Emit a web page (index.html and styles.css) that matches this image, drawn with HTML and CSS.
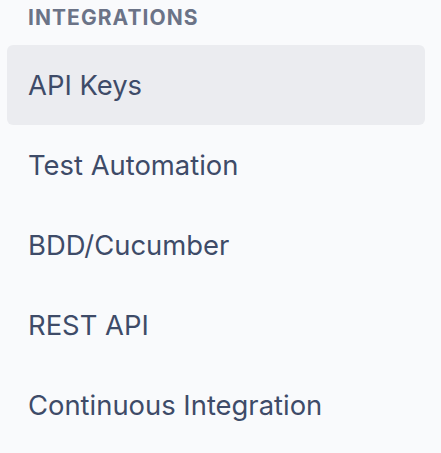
FILE: index.html
```html
<!DOCTYPE html>
<html lang="en">
<head>
  <meta charset="UTF-8">
  <meta name="viewport" content="width=device-width, initial-scale=1.0">
  <title>Integrations</title>
  <link rel="stylesheet" href="styles.css">
</head>
<body>
  <nav class="sidebar">
    <h2 class="section-title">Integrations</h2>
    <ul class="nav-list">
      <li><a class="nav-item active" href="#">API Keys</a></li>
      <li><a class="nav-item" href="#">Test Automation</a></li>
      <li><a class="nav-item" href="#">BDD/Cucumber</a></li>
      <li><a class="nav-item" href="#">REST API</a></li>
      <li><a class="nav-item" href="#">Continuous Integration</a></li>
    </ul>
  </nav>
</body>
</html>
```

FILE: styles.css
```css
body {
  margin: 0;
  background: #f9fafc;
  font-family: Inter, "Noto Sans", sans-serif;
}
.sidebar {
  padding: 0 16px 0 7px;
}
.section-title {
  margin: 0;
  padding: 5px 0 0 21px;
  height: 45px;
  box-sizing: border-box;
  font-size: 21px;
  font-weight: 700;
  letter-spacing: 0.05em;
  text-transform: uppercase;
  color: #6b7387;
  line-height: 25px;
}
.nav-list {
  list-style: none;
  margin: 0;
  padding: 0;
}
.nav-item {
  display: flex;
  align-items: center;
  height: 80px;
  padding-left: 21px;
  border-radius: 6px;
  font-size: 27.4px;
  color: #3e4b68;
  text-decoration: none;
}
.nav-item.active {
  background: #ebecf0;
}
```
